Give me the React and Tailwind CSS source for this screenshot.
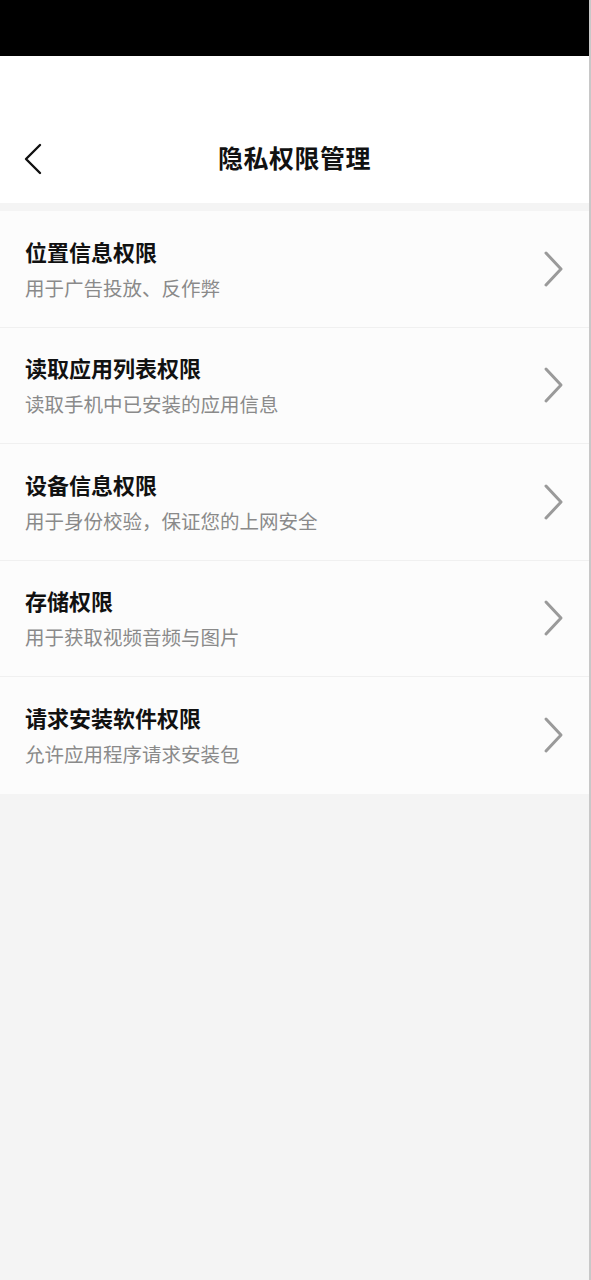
import React from 'react';

const items = [
  { title: '位置信息权限', desc: '用于广告投放、反作弊' },
  { title: '读取应用列表权限', desc: '读取手机中已安装的应用信息' },
  { title: '设备信息权限', desc: '用于身份校验，保证您的上网安全' },
  { title: '存储权限', desc: '用于获取视频音频与图片' },
  { title: '请求安装软件权限', desc: '允许应用程序请求安装包' },
];

const font = { fontFamily: '"Noto Sans CJK SC", "Noto Sans", sans-serif' };

export default function App() {
  return (
    <div className="min-h-[1280px] bg-[#f4f4f4] border-r-2 border-[#c8c8c8]" style={font}>
      {/* status bar */}
      <div className="h-[56px] bg-black" />

      {/* header */}
      <div className="h-[147px] bg-white flex items-end">
        <div className="relative h-[90px] w-full flex items-center justify-center">
          <svg className="absolute left-[22px] top-[30px]" width="22" height="32" viewBox="0 0 22 32" fill="none">
            <path d="M18 2 L4 16 L18 30" stroke="#111" strokeWidth="2.4" strokeLinecap="round" strokeLinejoin="round" />
          </svg>
          <h1 className="text-[25px] font-bold text-[#111] tracking-[0.5px]">隐私权限管理</h1>
        </div>
      </div>

      {/* list */}
      <div className="mt-[8px] bg-[#fcfcfc]">
        {items.map((item, i) => (
          <div
            key={item.title}
            className={`h-[116.5px] flex items-center justify-between pl-[25px] pr-[25px] ${i < items.length - 1 ? 'border-b border-[#f0f0f0]' : ''}`}
          >
            <div className="flex flex-col">
              <span className="text-[22px] font-bold text-[#111] leading-[30px]">{item.title}</span>
              <span className="text-[19.5px] text-[#8a8a8a] leading-[28px] mt-[8px]">{item.desc}</span>
            </div>
            <svg width="21" height="38" viewBox="0 0 21 38" fill="none">
              <path d="M3 3 L18 19 L3 35" stroke="#9a9a9a" strokeWidth="3" strokeLinecap="round" strokeLinejoin="round" />
            </svg>
          </div>
        ))}
      </div>
    </div>
  );
}
